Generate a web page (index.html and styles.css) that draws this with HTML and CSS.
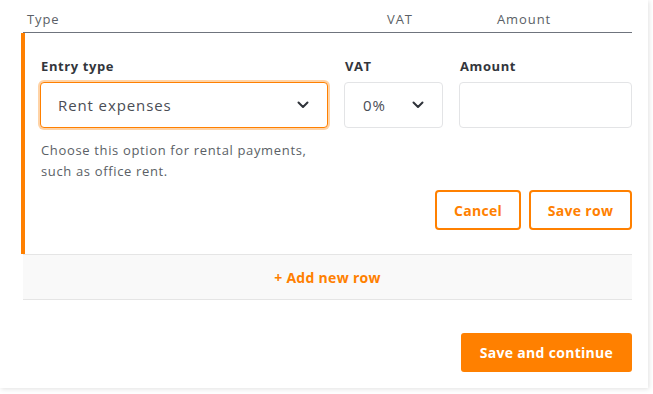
FILE: index.html
```html
<!DOCTYPE html>
<html lang="en">
<head>
<meta charset="utf-8">
<title>Entries</title>
<link rel="stylesheet" href="styles.css">
</head>
<body>
<div class="card">
  <div class="table-head">
    <div class="th th-type">Type</div>
    <div class="th th-vat">VAT</div>
    <div class="th th-amount">Amount</div>
  </div>
  <div class="edit-row">
    <div class="fields">
      <div class="field f-type">
        <label class="label">Entry type</label>
        <div class="select focused">
          <span class="value">Rent expenses</span>
          <svg class="chev" width="12" height="8" viewBox="0 0 12 8"><path d="M1.5 1.5 6 6 10.5 1.5" fill="none" stroke="#2f333a" stroke-width="2" stroke-linecap="round" stroke-linejoin="round"/></svg>
        </div>
        <p class="help">Choose this option for rental payments, such as office rent.</p>
      </div>
      <div class="field f-vat">
        <label class="label">VAT</label>
        <div class="select">
          <span class="value">0%</span>
          <svg class="chev" width="12" height="8" viewBox="0 0 12 8"><path d="M1.5 1.5 6 6 10.5 1.5" fill="none" stroke="#2f333a" stroke-width="2" stroke-linecap="round" stroke-linejoin="round"/></svg>
        </div>
      </div>
      <div class="field f-amount">
        <label class="label">Amount</label>
        <div class="input"></div>
      </div>
    </div>
    <div class="row-actions">
      <button class="btn-outline">Cancel</button>
      <button class="btn-outline">Save row</button>
    </div>
  </div>
  <div class="add-row">+ Add new row</div>
  <div class="footer">
    <button class="btn-primary">Save and continue</button>
  </div>
</div>
</body>
</html>
```
FILE: styles.css
```css
* { box-sizing: border-box; }
html, body { margin: 0; padding: 0; background: #ffffff; }
body {
  font-family: "Open Sans", "Liberation Sans", sans-serif;
  color: #3a3d44;
  width: 653px;
  height: 394px;
  overflow: hidden;
}
.card {
  width: 648px;
  height: 388px;
  background: #fff;
  box-shadow: 1px 1px 5px rgba(0, 0, 0, 0.12);
  padding: 0 16px 0 21px;
}
.table-head {
  display: flex;
  height: 33px;
  padding-top: 10px;
  padding-left: 4px;
  margin-left: 2px;
  border-bottom: 1px solid #6f747d;
  font-size: 13px;
  font-weight: 400;
  color: #5b5f66;
  line-height: 18px;
  letter-spacing: 0.9px;
}
.th-type { width: 360px; }
.th-vat { width: 110px; }
.edit-row {
  border-left: 4px solid #ff8000;
  padding: 24px 0 24px 15px;
}
.fields { display: flex; gap: 16px; }
.field { display: flex; flex-direction: column; }
.f-type { width: 288px; }
.f-vat { width: 99px; }
.f-amount { flex: 1; }
.label {
  font-size: 13px;
  font-weight: 700;
  color: #33363c;
  line-height: 18px;
  margin-bottom: 7px;
  padding-left: 1px;
  letter-spacing: 0.6px;
}
.select, .input {
  height: 46px;
  border: 1px solid #e3e4e6;
  border-radius: 4px;
  display: flex;
  align-items: center;
  justify-content: space-between;
  padding: 0 18px 0 18px;
  background: #fff;
}
.select.focused {
  border-color: #ff8000;
  box-shadow: 0 0 0 2px #ffd3a6;
  padding: 0 18px 0 17px;
}
.value {
  font-size: 15px;
  color: #4a4d55;
  letter-spacing: 0.9px;
}
.chev { display: block; }
.help {
  margin: 12px 0 0 1px;
  font-size: 13px;
  line-height: 21px;
  color: #5b5f66;
  letter-spacing: 0.65px;
}
.row-actions {
  display: flex;
  justify-content: flex-end;
  gap: 8px;
  margin-top: 8px;
}
.btn-outline {
  font-family: inherit;
  height: 40px;
  border: 2px solid #ff8000;
  border-radius: 4px;
  background: #fff;
  color: #ff8000;
  font-size: 14px;
  font-weight: 700;
  letter-spacing: 0.3px;
  padding: 0 8px;
}
.btn-outline:first-child { width: 86px; }
.btn-outline:last-child { width: 103px; }
.add-row {
  margin-left: 2px;
  height: 46px;
  background: #f9f9f9;
  border-top: 1px solid #e5e5e5;
  border-bottom: 1px solid #e5e5e5;
  display: flex;
  align-items: center;
  justify-content: center;
  font-size: 14px;
  font-weight: 700;
  color: #ff8000;
  letter-spacing: 0.3px;
}
.footer {
  display: flex;
  justify-content: flex-end;
  padding-top: 33px;
}
.btn-primary {
  font-family: inherit;
  height: 39px;
  width: 171px;
  border: none;
  border-radius: 3px;
  background: #ff8000;
  color: #fff;
  font-size: 14px;
  font-weight: 700;
  letter-spacing: 0.3px;
}
```
